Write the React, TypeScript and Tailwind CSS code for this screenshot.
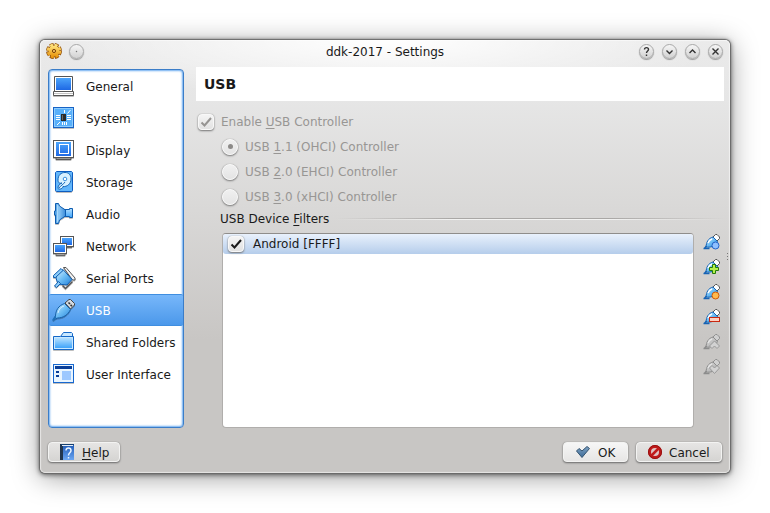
import { useState, type ReactNode } from "react";

const inkBlue = "#0d5cb0";

function Gradients() {
  return (
    <svg className="absolute h-0 w-0" aria-hidden="true">
      <defs>
        <linearGradient id="screen" x1="0" y1="0" x2="0" y2="1">
          <stop offset="0" stopColor="#4ba4fb" />
          <stop offset="1" stopColor="#1e68e4" />
        </linearGradient>
        <linearGradient id="sky" x1="0" y1="0" x2="0" y2="1">
          <stop offset="0" stopColor="#b4e0ff" />
          <stop offset="1" stopColor="#3fa4fa" />
        </linearGradient>
        <linearGradient id="cone" x1="0" y1="0" x2="1" y2="0">
          <stop offset="0" stopColor="#3f93dc" />
          <stop offset="0.4" stopColor="#8cc8f6" />
          <stop offset="1" stopColor="#3a8bd8" />
        </linearGradient>
        <linearGradient id="plug" x1="0" y1="0" x2="1" y2="1">
          <stop offset="0" stopColor="#d8f0ff" />
          <stop offset="0.5" stopColor="#6bbcf4" />
          <stop offset="1" stopColor="#2380d8" />
        </linearGradient>
        <linearGradient id="plugGray" x1="0" y1="0" x2="1" y2="1">
          <stop offset="0" stopColor="#dddddd" />
          <stop offset="1" stopColor="#a5a5a5" />
        </linearGradient>
        <linearGradient id="gold" x1="0" y1="0" x2="0" y2="1">
          <stop offset="0" stopColor="#ffe27a" />
          <stop offset="1" stopColor="#e8960f" />
        </linearGradient>
        <linearGradient id="tick" x1="0" y1="0" x2="0" y2="1">
          <stop offset="0" stopColor="#7fa3c4" />
          <stop offset="1" stopColor="#3d6a96" />
        </linearGradient>
        <linearGradient id="book" x1="0" y1="0" x2="0" y2="1">
          <stop offset="0" stopColor="#1c57b4" />
          <stop offset="1" stopColor="#6ba6f2" />
        </linearGradient>
      </defs>
    </svg>
  );
}

const icons: Record<string, ReactNode> = {
  General: (
    <>
      <path d="M2.500 17.500V2.500H20.500V17.500" fill="#fff" stroke="#555" />
      <rect x="4" y="4" width="15" height="12" fill="url(#screen)" />
      <path d="M1.500 17.500H21.500V21.500H1.500Z" fill="#fff" stroke="#555" />
      <path d="M2 19.500H21" stroke="#c4c4c4" />
    </>
  ),
  System: (
    <>
      <rect x="1.500" y="1.500" width="20" height="20" fill="#8cccff" stroke="#1763c5" />
      <rect x="3" y="3" width="17" height="17" fill="#58b0fa" />
      <path d="M12.500 4V7M18.500 4L15.500 7.500M4 9.500H8M4 11.500H8M4 13.500H8M15 9.500H19M15 11.500H19M15 13.500H19M5 19L8 16M10.500 16V19M12.500 16V19M14.500 16V19" stroke="#fff" />
      <rect x="9" y="8" width="5" height="7" fill="#2b2b2b" />
      <path d="M10.500 9V14" stroke="#6a6a6a" />
    </>
  ),
  Display: (
    <>
      <path d="M4 20H19V21.500H4Z" fill="#ddd" stroke="#555" />
      <rect x="1.500" y="2.500" width="20" height="17" fill="#fff" stroke="#555" />
      <rect x="4" y="4" width="15" height="14" fill="url(#screen)" />
      <rect x="7.500" y="6.500" width="9" height="9" stroke="#fff" />
    </>
  ),
  Storage: (
    <>
      <path d="M3.500 2.500L4.500 1.500H19.500L20.500 2.500V20.500L19.500 21.500H4.500L3.500 20.500Z" fill="#62b6fb" stroke="#0d5cc0" />
      <path d="M6 10C6 5 9 2.500 13 2.500C17 2.500 19 5 19 9C19 14 15 17 11 16.500C11 19 6 20 6 18C6 15 8 14 10 13C7 14 6 12 6 10Z" fill="#d9f1ff" stroke="#1666b8" />
      <circle cx="13" cy="9" r="1.800" fill="#fff" stroke="#3c90dc" />
      <path d="M7 18C9 15 11 15 13 12" stroke="#1768b7" />
    </>
  ),
  Audio: (
    <>
      <path d="M12 7.500H17.500V6.500H20.500V15.500H17.500V14.500H12Z" fill="url(#sky)" stroke={inkBlue} />
      <path d="M3.500 1.500H6.500L7.500 4L13.500 8V14L7.500 18L6.500 21.500H3.500V13H2.500V9H3.500Z" fill="url(#cone)" stroke={inkBlue} />
      <path d="M5.500 3V20" stroke="#a8d8fb" />
    </>
  ),
  Network: (
    <>
      <rect x="8.500" y="2.500" width="13" height="10" fill="#fff" stroke="#555" />
      <rect x="10" y="4" width="10" height="7" fill="url(#screen)" />
      <path d="M14 13.500H20" stroke="#666" />
      <rect x="1.500" y="9.500" width="13" height="10" fill="#fff" stroke="#555" />
      <rect x="3" y="11" width="10" height="7" fill="url(#screen)" />
      <path d="M4 20H13V21.500H4Z" fill="#ddd" stroke="#666" />
    </>
  ),
  "Serial Ports": (
    <>
      <path d="M11.500 1.500H14L23 12V14H20.500Z" fill="#f2f2f2" stroke="#555" />
      <path d="M5 9L11 3.500L20 13.500L15 19L6 18L4 12Z" fill="url(#plug)" stroke={inkBlue} />
      <path d="M1.500 9.500L9 2.500L11 4.500L3.500 11.500H1.500Z" fill="#8ccdfa" stroke={inkBlue} />
      <path d="M2.500 20L6.500 15.500L8.500 17.500L4.500 21.500Z" fill="#8ccdfa" stroke={inkBlue} />
      <path d="M10.500 19.500L13.500 22.500L20.500 15.500" stroke="#555" strokeWidth="1.500" />
    </>
  ),
  USB: (
    <>
      <path d="M13 5L17 1.500H18.500L22.500 5.500V7L18.500 11Z" fill="#d4dae0" stroke="#444" />
      <path d="M16.500 4.500L18 6M18.500 7L20 8" stroke="#333" strokeWidth="1.600" />
      <path d="M12.500 5.500C6 8 4 12 3.500 18L2 21.500L5.500 20C11 20 16 17 18.500 11.500Z" fill="url(#plug)" stroke="#1560a8" />
      <path d="M3.500 18.500L1 22.500" stroke="#1f70b8" strokeWidth="2" />
      <path d="M6 15C7 11 9 9 12 8" stroke="#d4eeff" />
    </>
  ),
  "Shared Folders": (
    <>
      <path d="M1.500 19.500V6.500H8.500L11.500 2.500H19.500L20.500 3.500V6.500H21.500V19.500Z" fill="#c9e8ff" stroke="#1468c8" />
      <path d="M9 6.500H21" stroke="#1468c8" />
      <rect x="3" y="8" width="17" height="10" fill="url(#sky)" />
    </>
  ),
  "User Interface": (
    <>
      <rect x="1.500" y="2.500" width="20" height="18" fill="#e9f5ff" stroke="#1768d0" />
      <path d="M3 5.500H20" stroke="#0a3e98" strokeWidth="3" />
      <path d="M4 9H7V11H4ZM4 13H7V15H4Z" fill="#0a3e98" />
      <rect x="10" y="9" width="9" height="9" fill="#9cc8ff" />
    </>
  ),
};

function ToolIcon({ kind }: { kind: string }) {
  const off = kind === "up" || kind === "down";
  const line = off ? "#8c8c8c" : "#1663b4";
  return (
    <svg viewBox="0 0 18 18" className="h-[18px] w-[18px]" fill="none" aria-hidden="true">
      <path d="M10 4L12.500 1.500H14L16.500 4V5.500L14 8Z" fill={off ? "#d0d0d0" : "#fff"} stroke={off ? "#909090" : "#555"} />
      <path d="M10 4C5 5.500 3.500 9 3 14C7 14.500 12 14 14.500 8.500Z" fill={off ? "url(#plugGray)" : "url(#plug)"} stroke={line} />
      <path d="M0.500 15.500H6.500" stroke={line} strokeWidth="1.500" />
      <path d="M1.500 15.500L3.500 13" stroke={line} strokeWidth="1.500" />
      <path d="M5 10C6 7.500 7 6.500 9 6" stroke={off ? "#e4e4e4" : "#fff"} strokeWidth="1.500" />
      {kind === "new" && <circle cx="12.500" cy="12.500" r="3.500" fill="#8fc0ff" stroke="#2465c8" />}
      {kind === "add" && <path d="M9.500 6.500H12.500V9.500H15.500V12.500H12.500V15.500H9.500V12.500H6.500V9.500H9.500Z" fill="#b4f04c" stroke="#247a08" />}
      {kind === "edit" && <circle cx="12.500" cy="12.500" r="3.500" fill="#ffb94e" stroke="#d05a08" />}
      {kind === "remove" && <rect x="6.500" y="9.500" width="10" height="4" fill="#ffd0c0" stroke="#c82810" />}
      {kind === "up" && <path d="M6.500 13L11.500 8L16.500 13L14 15.500L11.500 13L9 15.500Z" fill="#d2d2d2" stroke="#9a9a9a" />}
      {kind === "down" && <path d="M6.500 10L9 7.500L11.500 10L14 7.500L16.500 10L11.500 15.500Z" fill="#d2d2d2" stroke="#9a9a9a" />}
    </svg>
  );
}

function TitleButton({ label, children }: { label: string; children: ReactNode }) {
  return (
    <button
      type="button"
      aria-label={label}
      className="flex h-[15px] w-[15px] items-center justify-center rounded-full border border-[#a9a9a9] bg-linear-to-b from-[#f6f6f6] to-[#d2d2d2] shadow-[0_1px_1px_#999]"
    >
      <svg viewBox="0 0 13 13" className="h-[13px] w-[13px] shrink-0" fill="none" stroke="#333" strokeWidth="1.400" aria-hidden="true">
        {children}
      </svg>
    </button>
  );
}

function CheckBox({ id, checked, disabled, onChange }: { id: string; checked: boolean; disabled?: boolean; onChange?: () => void }) {
  return (
    <span className="relative block h-4 w-4 shrink-0">
      <input
        id={id}
        type="checkbox"
        checked={checked}
        disabled={disabled}
        readOnly={!onChange}
        onChange={onChange}
        className="block h-4 w-4 appearance-none rounded-[4px] border border-[#f8f8f8] bg-linear-to-b from-[#f4f4f4] to-[#e2e2e2] shadow-[0_1px_2px_#777,0_0_1px_#999]"
      />
      {checked && (
        <svg viewBox="0 0 16 16" className="pointer-events-none absolute inset-0 h-4 w-4" fill="none" aria-hidden="true">
          <path d="M3.500 8.500L6.500 11.500L13 4" stroke={disabled ? "#969492" : "#1b1b1b"} strokeWidth="2" />
        </svg>
      )}
    </span>
  );
}

const controllers = [
  { key: "1", rest: ".1 (OHCI) Controller" },
  { key: "2", rest: ".0 (EHCI) Controller" },
  { key: "3", rest: ".0 (xHCI) Controller" },
];

const tools = [
  { kind: "new", label: "Add empty filter" },
  { kind: "add", label: "Add filter from device" },
  { kind: "edit", label: "Edit filter" },
  { kind: "remove", label: "Remove filter" },
  { kind: "up", label: "Move filter up" },
  { kind: "down", label: "Move filter down" },
];

const pushButton =
  "flex h-5 items-center rounded-[4px] border border-[#f3f3f2] bg-linear-to-b shadow-[0_1px_2px_#6b6b6b,0_0_1px_#888]";
const mnemonic = "underline decoration-1 underline-offset-2";

export default function App() {
  const [page, setPage] = useState("USB");
  const [android, setAndroid] = useState(true);

  return (
    <div className="flex min-h-screen flex-col bg-white px-10 pt-10 pb-10 font-['DejaVu_Sans',sans-serif] text-xs text-[#1a1a1a]">
      <Gradients />
      <main className="flex flex-1 flex-col rounded-[5px] bg-[radial-gradient(ellipse_340px_60px_at_50%_0,#ffffff,#ffffff00),linear-gradient(#eaeaea,#e6e6e6_60px,#d9d8d7_170px,#c8c6c4_300px)] shadow-[inset_0_0_1px_1px_#ffffff90,0_0_1px_1px_#6a6a6a,0_1px_5px_1px_#00000088,0_4px_28px_#00000066]">
        <header className="flex h-[27px] items-center px-[6px] pb-[5px]">
          <div className="flex w-20 items-center gap-[7px]">
            <svg viewBox="0 0 16 16" className="h-4 w-4" aria-hidden="true">
              <circle cx="8" cy="8" r="6.200" fill="none" stroke="#925009" strokeWidth="3.600" strokeDasharray="3.670 1.200" />
              <circle cx="8" cy="8" r="6" fill="url(#gold)" stroke="#925009" strokeWidth="1" />
              <circle cx="8" cy="8" r="6" fill="none" stroke="url(#gold)" strokeWidth="2.500" strokeDasharray="2.900 1.812" />
              <circle cx="8" cy="8" r="5" fill="url(#gold)" />
              <circle cx="8" cy="8" r="1.600" fill="#f0c060" stroke="#7b4208" />
            </svg>
            <TitleButton label="On all desktops">
              <circle cx="6.500" cy="6.500" r="0.300" strokeWidth="0.700" />
            </TitleButton>
          </div>
          <h1 className="flex-1 pt-0.5 text-center">ddk-2017 - Settings</h1>
          <div className="flex w-20 justify-end gap-2 pr-px">
            <TitleButton label="Context help">
              <path d="M4.500 4.500C4.500 2 8.500 2 8.500 4.500C8.500 6 6.500 6 6.500 8M6.500 9.500V11" />
            </TitleButton>
            <TitleButton label="Minimize">
              <path d="M3.500 5.500L6.500 8.500L9.500 5.500" />
            </TitleButton>
            <TitleButton label="Maximize">
              <path d="M3.500 8L6.500 5L9.500 8" />
            </TitleButton>
            <TitleButton label="Close">
              <path d="M3.500 3.500L9.500 9.500M9.500 3.500L3.500 9.500" />
            </TitleButton>
          </div>
        </header>

        <div className="flex flex-1 gap-3 pl-2">
          <nav className="mt-0.5 w-[136px] shrink-0 rounded-[4px] border border-[#3b7dc8] bg-white shadow-[inset_0_0_2px_1px_#6aabf0]">
            {Object.keys(icons).map((name) => (
              <button
                key={name}
                type="button"
                onClick={() => setPage(name)}
                className={
                  name === page
                    ? "flex h-8 w-full items-center gap-[10px] rounded-[2px] border-y border-y-[#3f8ee0] bg-linear-to-b from-[#77b7fa] to-[#4b98ea] pl-[3px] whitespace-nowrap text-white"
                    : "flex h-8 w-full items-center gap-[10px] pl-[3px] whitespace-nowrap"
                }
              >
                <svg viewBox="0 0 24 24" className="h-6 w-6 shrink-0 drop-shadow-[0_1px_0_#00000040]" fill="none" aria-hidden="true">
                  {icons[name]}
                </svg>
                <span className="pt-0.5">{name}</span>
              </button>
            ))}
          </nav>

          <section className="flex min-w-0 flex-1 flex-col">
            <h2 className="mr-[6px] flex h-[34px] shrink-0 items-center bg-white px-2 text-sm font-bold">USB</h2>

            <div className="mt-2 flex h-[25px] items-center gap-[7px] pl-0.5 text-[#989694]">
              <CheckBox id="enable" checked disabled />
              <label htmlFor="enable">
                Enable <span className={mnemonic}>U</span>SB Controller
              </label>
            </div>
            {controllers.map(({ key, rest }, i) => (
              <div key={key} className="flex h-[25px] items-center gap-[7px] pl-[26px] text-[#989694]">
                <span className="relative block h-4 w-4">
                  <input
                    id={"usb" + key}
                    type="radio"
                    name="controller"
                    defaultChecked={i === 0}
                    disabled
                    className="peer block h-4 w-4 appearance-none rounded-full border border-[#f8f8f8] bg-linear-to-b from-[#f0f0f0] to-[#e4e4e4] shadow-[0_1px_2px_#777,0_0_1px_#999]"
                  />
                  <span className="pointer-events-none absolute inset-0 m-auto hidden h-[5px] w-[5px] rounded-full bg-[#8c8a88] peer-checked:block" />
                </span>
                <label htmlFor={"usb" + key}>
                  USB <span className={mnemonic}>{key}</span>
                  {rest}
                </label>
              </div>
            ))}

            <fieldset className="flex min-h-0 flex-1 flex-col">
              <div className="flex h-6 items-center gap-2 pr-[6px] pb-1 pl-6">
                <span id="filters">
                  USB Device <span className={mnemonic}>F</span>ilters
                </span>
                <span className="h-0.5 flex-1 bg-[linear-gradient(90deg,#ffffff00,#a9a7a5_30%,#a9a7a5_70%,#ffffff00),linear-gradient(90deg,#ffffff00,#f2f2f1_30%,#f2f2f1_70%,#ffffff00)] bg-[length:100%_1px,100%_1px] bg-[position:0_0,0_1px] bg-no-repeat" />
              </div>
              <div className="flex flex-1 pl-[26px]">
                <ul aria-labelledby="filters" className="flex-1 rounded-[4px] border border-[#b0aeac] border-t-[#8f8d8b] bg-white">
                  <li className="flex h-5 items-center gap-2 rounded-[3px] bg-linear-to-b from-[#e9f1fc] to-[#b5cdeb] pl-[5px]">
                    <CheckBox id="android" checked={android} onChange={() => setAndroid(!android)} />
                    <label htmlFor="android" className="pl-px">Android [FFFF]</label>
                  </li>
                </ul>
                <div className="ml-[9px] flex w-6 flex-col">
                  {tools.map(({ kind, label }) => (
                    <button key={kind} type="button" aria-label={label} disabled={kind === "up" || kind === "down"} className="flex h-[25px] w-[18px] items-start">
                      <ToolIcon kind={kind} />
                    </button>
                  ))}
                </div>
                <div className="flex w-[3px] flex-col gap-0.5 pt-5">
                  <span className="h-px w-px bg-[#777]" />
                  <span className="h-px w-px bg-[#777]" />
                  <span className="h-px w-px bg-[#777]" />
                </div>
              </div>
            </fieldset>
          </section>
        </div>

        <footer className="flex gap-2 px-2 pt-3.5 pb-[11px]">
          <button type="button" className={pushButton + " mr-auto w-[72px] gap-2 from-[#e6e5e4] to-[#d5d4d2] pl-[11px]"}>
            <svg viewBox="0 0 14 18" className="h-[18px] w-[14px]" fill="none" aria-hidden="true">
              <path d="M0 1H14V17H0Z" fill="url(#book)" />
              <path d="M0 1H3V17H0Z" fill="#22364e" />
              <path d="M1 1.500H14" stroke="#164071" />
              <path d="M2 2.500H13" stroke="#e4edf7" />
              <path d="M6 7.500C6 4 11 4 11 7.500C11 10 8.500 9.500 8.500 12.500M8.500 14V15.500" stroke="#eaf4ff" strokeWidth="1.500" />
            </svg>
            <span className="pt-0.5">
              <span className={mnemonic}>H</span>elp
            </span>
          </button>
          <button type="button" className={pushButton + " w-[65px] gap-[7px] from-[#f6f6f6] to-[#e7e6e5] pl-[11px]"}>
            <svg viewBox="0 0 16 16" className="h-4 w-4" aria-hidden="true">
              <path d="M1.500 7L4 4.500L7 7L12 2.500L14.500 4.500L7 13.500Z" fill="url(#tick)" stroke="#34536f" strokeLinejoin="round" />
            </svg>
            <span className="pt-0.5">OK</span>
          </button>
          <button type="button" className={pushButton + " w-[86px] gap-[6px] from-[#e6e5e4] to-[#d5d4d2] pl-[10px]"}>
            <svg viewBox="0 0 16 16" className="h-4 w-4" fill="none" aria-hidden="true">
              <circle cx="8" cy="8" r="7" fill="#c01a1a" />
              <circle cx="8" cy="8" r="6.500" stroke="#960f0f" />
              <circle cx="8" cy="8" r="4" fill="#e0c4c4" />
              <path d="M4.500 11.500L11.500 4.500" stroke="#c01a1a" strokeWidth="2.500" />
            </svg>
            <span className="pt-0.5">Cancel</span>
          </button>
        </footer>
      </main>
    </div>
  );
}
